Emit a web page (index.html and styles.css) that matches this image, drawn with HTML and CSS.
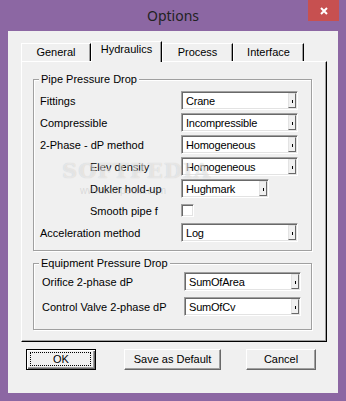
FILE: index.html
```html
<!DOCTYPE html>
<html lang="en">
<head>
    <meta charset="UTF-8">
    <title>Options</title>
    <link rel="stylesheet" href="styles.css">
</head>
<body>
    <div class="window">
        <div class="titlebar">
            <span class="title">Options</span>
            <div class="close">
                <svg width="8" height="8" viewBox="0 0 8 8"><path d="M1 1 L7 7 M7 1 L1 7" stroke="#fff" stroke-width="2"/></svg>
            </div>
        </div>

        <div class="client">
            <div class="tabs">
                <div class="tab">General</div>
                <div class="tab active">Hydraulics</div>
                <div class="tab">Process</div>
                <div class="tab">Interface</div>
            </div>

            <div class="panel">
                <!-- Pipe pressure drop -->
                <div class="group pipe">
                    <span class="legend">Pipe Pressure Drop</span>
                    <div class="row">
                        <span class="label">Fittings</span>
                        <div class="combo"><span class="value">Crane</span><span class="drop"></span></div>
                    </div>
                    <div class="row">
                        <span class="label">Compressible</span>
                        <div class="combo"><span class="value">Incompressible</span><span class="drop"></span></div>
                    </div>
                    <div class="row">
                        <span class="label">2-Phase - dP method</span>
                        <div class="combo"><span class="value">Homogeneous</span><span class="drop"></span></div>
                    </div>
                    <div class="row">
                        <span class="label sub">Elev density</span>
                        <div class="combo"><span class="value">Homogeneous</span><span class="drop"></span></div>
                    </div>
                    <div class="row">
                        <span class="label sub">Dukler hold-up</span>
                        <div class="combo short"><span class="value">Hughmark</span><span class="drop"></span></div>
                    </div>
                    <div class="row">
                        <span class="label sub">Smooth pipe f</span>
                        <div class="check"></div>
                    </div>
                    <div class="row">
                        <span class="label">Acceleration method</span>
                        <div class="combo"><span class="value">Log</span><span class="drop"></span></div>
                    </div>
                </div>

                <!-- Equipment pressure drop -->
                <div class="group equip">
                    <span class="legend">Equipment Pressure Drop</span>
                    <div class="row">
                        <span class="label">Orifice 2-phase dP</span>
                        <div class="combo"><span class="value">SumOfArea</span><span class="drop"></span></div>
                    </div>
                    <div class="row">
                        <span class="label">Control Valve 2-phase dP</span>
                        <div class="combo"><span class="value">SumOfCv</span><span class="drop"></span></div>
                    </div>
                </div>

                <div class="watermark">SOFTPEDIA<span class="wm-url">www.softpedia.com</span></div>
            </div>

            <div class="buttons">
                <div class="btn default">OK</div>
                <div class="btn save">Save as Default</div>
                <div class="btn cancel">Cancel</div>
            </div>
        </div>
    </div>
</body>
</html>
```

FILE: styles.css
```css
body
{
    margin: 0;
    background: #8c67a3;
    font-family: "Liberation Sans", Arial, sans-serif;
    font-size: 11px;
    color: #000;
}

.window
{
    width: 346px;
    height: 401px;
}

.titlebar
{
    height: 31px;
    display: grid;
    grid-template-columns: 1fr auto 1fr;
    align-items: start;
}

.title
{
    grid-column: 2;
    font-family: "Noto Sans", sans-serif;
    font-size: 14px;
    line-height: 31px;
    color: #222;
}

.close
{
    grid-column: 3;
    justify-self: end;
    margin-right: 7px;
    width: 31px;
    height: 21px;
    background: #c75050;
    display: flex;
    align-items: center;
    justify-content: center;
}

.client
{
    margin: 0 8px;
    height: 362px;
    background: #f0f0f0;
    padding: 10px 0 0 13px;
    box-sizing: border-box;
}

.tabs
{
    display: flex;
    align-items: flex-end;
    height: 20px;
}

.tab
{
    width: 71px;
    height: 18px;
    box-sizing: border-box;
    border-top: 1px solid #fff;
    border-left: 1px solid #fff;
    border-right: 1px solid #000;
    box-shadow: inset -1px 0 0 #a0a0a0;
    text-align: center;
    line-height: 17px;
    background: #f0f0f0;
}

.tab:first-child
{
    width: 70px;
}

.tab.active
{
    height: 21px;
    margin-bottom: -1px;
    line-height: 15px;
    position: relative;
    z-index: 1;
}

.panel
{
    position: relative;
    width: 306px;
    height: 281px;
    box-sizing: border-box;
    border-top: 1px solid #fff;
    border-left: 1px solid #fff;
    border-right: 1px solid #000;
    border-bottom: 1px solid #000;
    box-shadow: inset -1px -1px 0 #a0a0a0;
    padding: 17px 0 0 11px;
}

.group
{
    position: relative;
    width: 279px;
    box-sizing: border-box;
    border: 1px solid #a0a0a0;
    box-shadow: 1px 1px 0 #fff, inset 1px 1px 0 #fff;
}

.group.pipe
{
    height: 172px;
    padding-top: 11px;
}

.group.equip
{
    height: 67px;
    margin-top: 12px;
    padding-top: 8px;
}

.legend
{
    position: absolute;
    top: -7px;
    left: 5px;
    padding: 0 2px;
    line-height: 13px;
    background: #f0f0f0;
}

.row
{
    display: flex;
    align-items: center;
    height: 19px;
    margin-bottom: 3px;
}

.equip .row
{
    margin-bottom: 6px;
}

.label
{
    width: 147px;
    padding-left: 6px;
    box-sizing: border-box;
}

.label.sub
{
    padding-left: 56px;
}

.equip .label
{
    width: 150px;
    padding-left: 8px;
}

.combo
{
    display: flex;
    align-items: center;
    width: 117px;
    height: 19px;
    box-sizing: border-box;
    background: #fff;
    border-top: 1px solid #a0a0a0;
    border-left: 1px solid #a0a0a0;
    border-right: 1px solid #fff;
    border-bottom: 1px solid #fff;
    box-shadow: inset 1px 1px 0 #696969, inset -1px -1px 0 #e3e3e3;
    padding: 1px 1px 1px 4px;
}

.combo.short
{
    width: 88px;
}

.value
{
    flex: 1;
    letter-spacing: -0.2px;
}

.drop
{
    width: 8px;
    height: 15px;
    box-sizing: border-box;
    background: #f0f0f0;
    border-top: 1px solid #e3e3e3;
    border-left: 1px solid #e3e3e3;
    border-right: 1px solid #696969;
    border-bottom: 1px solid #696969;
    display: flex;
    align-items: center;
    justify-content: center;
}

.drop::after
{
    content: "";
    width: 1px;
    height: 3px;
    margin-top: 2px;
    background: #000;
}

.check
{
    width: 13px;
    height: 13px;
    box-sizing: border-box;
    background: #fff;
    border-top: 1px solid #a0a0a0;
    border-left: 1px solid #a0a0a0;
    border-right: 1px solid #fff;
    border-bottom: 1px solid #fff;
    box-shadow: inset 1px 1px 0 #696969, inset -1px -1px 0 #e3e3e3;
}

.buttons
{
    display: flex;
    margin-top: 7px;
    padding-left: 5px;
}

.btn
{
    position: relative;
    height: 21px;
    width: 70px;
    box-sizing: border-box;
    border-top: 1px solid #fff;
    border-left: 1px solid #fff;
    border-right: 1px solid #696969;
    border-bottom: 1px solid #696969;
    box-shadow: inset -1px -1px 0 #a0a0a0;
    text-align: center;
    line-height: 19px;
    background: #f0f0f0;
}

.btn.default
{
    border: 1px solid #000;
    box-shadow: inset 1px 1px 0 #fff, inset -1px -1px 0 #696969, inset -2px -2px 0 #a0a0a0;
}

.btn.default::after
{
    content: "";
    position: absolute;
    top: 2px;
    left: 3px;
    right: 4px;
    bottom: 3px;
    border: 1px dotted #000;
}

.btn.save
{
    width: 97px;
    margin-left: 28px;
}

.btn.cancel
{
    margin-left: 25px;
}

.watermark
{
    position: absolute;
    left: 40px;
    top: 96px;
    font-family: "DejaVu Serif", serif;
    font-size: 21px;
    font-weight: bold;
    letter-spacing: 1px;
    color: rgba(255, 255, 255, 0.55);
    text-shadow: 0 0 1px rgba(0, 0, 0, 0.18);
    pointer-events: none;
    z-index: 2;
}

.wm-url
{
    display: block;
    margin: 2px 0 0 18px;
    font-family: "Liberation Sans", sans-serif;
    font-size: 10px;
    font-weight: normal;
    letter-spacing: 0;
    color: rgba(160, 160, 160, 0.3);
    text-shadow: none;
}
```
